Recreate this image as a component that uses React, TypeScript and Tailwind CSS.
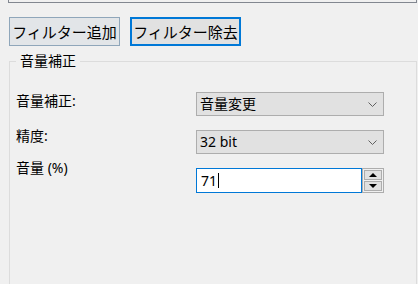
import React from "react";

const font = { fontFamily: '"Noto Sans", "Noto Sans CJK JP", sans-serif' };

function Chevron() {
  return (
    <svg width="9" height="5" viewBox="0 0 9 5" className="block">
      <polyline points="0.5,0.5 4.5,4.5 8.5,0.5" fill="none" stroke="#606060" strokeWidth="1" />
    </svg>
  );
}

function Combo({ text }: { text: string }) {
  return (
    <div className="w-[188px] h-[24px] border border-[#adadad] bg-[#e1e1e1] flex items-center pl-[3px] pr-[6px] text-[14px] leading-[20px] text-black">
      <span className="flex-1">{text}</span>
      <Chevron />
    </div>
  );
}

function Tri({ up }: { up: boolean }) {
  return (
    <svg width="8" height="4" viewBox="0 0 8 4" className="block">
      {up ? <polygon points="0,4 8,4 4,0" fill="#000" /> : <polygon points="0,0 8,0 4,4" fill="#000" />}
    </svg>
  );
}

export default function App() {
  return (
    <div className="w-[418px] h-[284px] bg-[#f0f0f0] overflow-hidden text-black" style={font}>
      <div className="ml-[8px] w-[409px] h-[3px] border-x border-b border-[#828790]" />
      <div className="flex gap-[10px] pl-[9px] mt-[14px]">
        <div className="w-[111px] h-[29px] border border-[#8fa6ba] bg-[#e2e5e8] flex items-center justify-center text-[15px] leading-[20px]">
          フィルター追加
        </div>
        <div className="w-[111px] h-[29px] border-2 border-[#0078d7] bg-[#e1e1e1] flex items-center justify-center text-[15px] leading-[20px]">
          フィルター除去
        </div>
      </div>
      <div className="relative mt-[15px] ml-[9px] w-[408px] h-[260px] border border-[#dcdcdc]">
        <div className="absolute top-[-11px] left-[6px] px-[4px] bg-[#f0f0f0] text-[14px] leading-[20px]">音量補正</div>
        <div className="pt-[30px] pl-[6px] flex flex-col gap-[14px] text-[14px] leading-[20px]">
          <div className="flex items-start">
            <div className="w-[180px] mt-[-1px]">音量補正:</div>
            <Combo text="音量変更" />
          </div>
          <div className="flex items-start">
            <div className="w-[180px] mt-[-4px]">精度:</div>
            <Combo text="32 bit" />
          </div>
          <div className="flex items-start">
            <div className="w-[180px] mt-[-10px]">音量 (%)</div>
            <div className="flex h-[25px]">
              <div className="w-[166px] h-[25px] border border-[#0078d7] bg-white flex items-center pl-[4px]">
                <span>71</span>
                <span className="w-px h-[15px] bg-black ml-[1px]" />
              </div>
              <div className="w-[22px] h-[25px] border border-[#adadad] bg-[#f0f0f0] flex flex-col p-px gap-px">
                <div className="flex-1 border border-[#adadad] bg-[#e1e1e1] flex items-center justify-center">
                  <Tri up />
                </div>
                <div className="flex-1 border border-[#adadad] bg-[#e1e1e1] flex items-center justify-center">
                  <Tri up={false} />
                </div>
              </div>
            </div>
          </div>
        </div>
      </div>
    </div>
  );
}
